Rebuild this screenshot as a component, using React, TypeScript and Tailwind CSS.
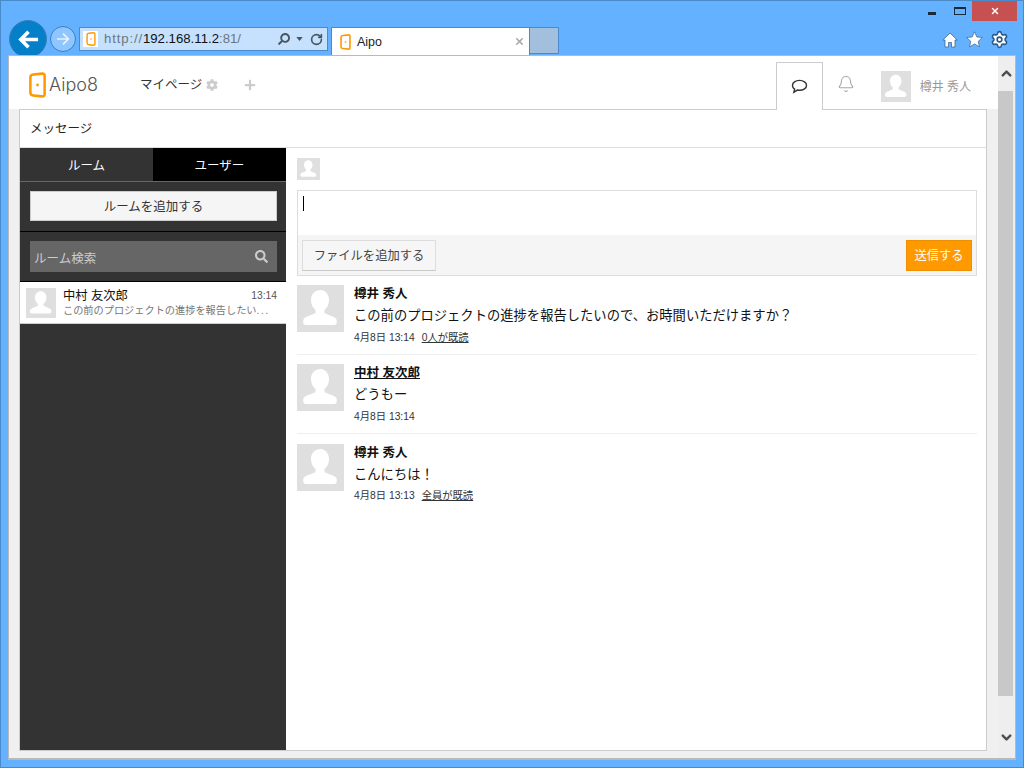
import { Bell, ChevronDown, ChevronUp, RotateCw, Settings, X } from "lucide-react";
import { FaCog, FaPlus, FaSearch } from "react-icons/fa";

const font = { sans: "font-['Liberation_Sans','Noto_Sans_CJK_JP',sans-serif]" };

function Person({ className }: { className: string }) {
  return (
    <div className={`shrink-0 bg-[#dfdfdf] ${className}`}>
      <svg viewBox="0 0 47 47" className="block h-full w-full">
        <path
          d="M23.500 5c-5.500 0-9.500 4-9.500 10 0 4.500 2 8 4.500 10v3c-3 2-9 3-11.500 5.500-1 1.500-1 3.500-.5 5 .5 1 1.500 1.500 3 1.500h27c1.500 0 2.500-.5 3-1.500.5-1.500.5-3.500-.5-5C36.500 31 30.500 30 27.500 28v-3c2.500-2 4.500-5.500 4.500-10 0-6-4-10-8.500-10z"
          fill="#fff"
        />
      </svg>
    </div>
  );
}

function DoorLogo({ className }: { className: string }) {
  return (
    <svg viewBox="0 0 16 24" className={className}>
      <path d="M4 2.200 12.500 1.300c1.200-.1 2.200.6 2.200 1.900v17.600c0 1.300-1 2-2.200 1.900L4 21.800c-1.600-.2-2.700-1.200-2.700-2.800V5c0-1.600 1.100-2.600 2.700-2.800z" fill="none" stroke="#ff9900" strokeWidth="2.400" />
      <circle cx="8" cy="12" r="1.300" fill="#ff9900" />
    </svg>
  );
}

function Message({
  name,
  text,
  time,
  read,
  underline,
  last,
}: {
  name: string;
  text: string;
  time: string;
  read?: string;
  underline?: boolean;
  last?: boolean;
}) {
  return (
    <div className={`flex gap-[10px] ${last ? "pt-[10px]" : "h-[79px] border-b border-[#eeeeee] pt-[9px]"}`}>
      <Person className="h-[47px] w-[47px]" />
      <div className="min-w-0 flex-1">
        <div className={`h-[18px] text-[12.500px] leading-[18px] font-bold text-[#111] ${underline ? "underline" : ""}`}>{name}</div>
        <div className="mt-[3px] text-[13.300px] leading-[20px] text-[#111]">{text}</div>
        <div className={`${last ? "mt-[4px]" : "mt-[5px]"} flex gap-[7px] text-[10.300px] leading-[14px] text-[#333]`}>
          <span>{time}</span>
          {read && <span className="underline">{read}</span>}
        </div>
      </div>
    </div>
  );
}

export default function App() {
  return (
    <div className={`flex h-[768px] w-[1024px] flex-col overflow-hidden border border-[#4a8acb] bg-[#63b1ff] ${font.sans}`}>
      {/* window controls */}
      <div className="flex h-[20px] shrink-0 items-start justify-end pr-[6px]">
        <div className="flex h-[20px] w-[28px] items-center justify-center pr-[4px]">
          <div className="h-[3px] w-[8px] translate-y-[2px] bg-[#1a2a3a]" />
        </div>
        <div className="flex h-[20px] w-[24px] items-center justify-center">
          <div className="h-[8px] w-[12px] border border-t-2 border-[#1a2a3a]" />
        </div>
        <div className="flex h-[20px] w-[45px] items-center justify-center bg-[#c75050]">
          <X className="h-[10px] w-[10px] text-white" strokeWidth={3.500} />
        </div>
      </div>

      {/* browser toolbar */}
      <div className="flex h-[34px] shrink-0 items-start pl-[8px]">
        <div className="-mt-[1px] flex h-[38px] w-[38px] shrink-0 items-center justify-center rounded-full border border-[#3a7fb5] bg-[#0580c8]">
          <svg viewBox="0 0 24 24" className="h-[23px] w-[23px]" fill="none" stroke="#fff" strokeWidth="3.800">
            <path d="M12 4 4 12l8 8M4 12h18" />
          </svg>
        </div>
        <div className="mt-[5px] ml-[3px] flex h-[26px] w-[26px] shrink-0 items-center justify-center rounded-full border border-[#3a7fc0] bg-[#8fc6ff]">
          <svg viewBox="0 0 24 24" className="h-[16px] w-[16px]" fill="none" stroke="#eaf4ff" strokeWidth="2.500">
            <path d="M12 4l8 8-8 8M20 12H3" />
          </svg>
        </div>
        <div className="mt-[6px] ml-[3px] flex h-[24px] w-[249px] shrink-0 items-center border border-[#4a8acb] bg-[#c5e1fd] pr-[4px] pl-[3px]">
          <div className="flex h-[16px] w-[15px] items-center justify-center bg-white">
            <DoorLogo className="h-[14px] w-[10px]" />
          </div>
          <div className="ml-[6px] flex-1 text-[13.200px] text-[#6b7680]">
            <span className="tracking-[0.85px]">http://</span>
            <span className="text-[#111]">192.168.11.2</span>:81/
          </div>
          <FaSearch className="h-[12px] w-[12px] -scale-x-100 text-[#4b5560]" />
          <svg viewBox="0 0 8 5" className="ml-[6px] h-[4px] w-[7px]">
            <path d="M0 0h8L4 5z" fill="#4b5560" />
          </svg>
          <RotateCw className="ml-[7px] h-[13px] w-[13px] text-[#4b5560]" strokeWidth={3} />
        </div>
        <div className="mt-[6px] ml-[3px] flex h-[28px] w-[199px] shrink-0 items-center border-x border-t border-[#4a8acb] bg-white pr-[4px] pl-[8px]">
          <DoorLogo className="h-[16px] w-[11px]" />
          <span className="ml-[6px] flex-1 pt-[2px] text-[12.500px] text-[#222]">Aipo</span>
          <X className="h-[11px] w-[11px] text-[#a8a8a8]" strokeWidth={3.500} />
        </div>
        <div className="mt-[6px] h-[27px] w-[29px] shrink-0 border-y border-r border-[#4a8acb] bg-[#a2c0de]" />
        <div className="mt-[9px] ml-auto flex items-center pr-[14px]">
          <svg viewBox="0 0 16 16" className="h-[16px] w-[16px]" fill="#fff" stroke="#2b5a88" strokeWidth=".7">
            <path d="M8 1 .8 8h2.200v7h3.500v-4.500h3V15H13V8h2.200z" />
          </svg>
          <svg viewBox="0 0 16 16" className="ml-[8px] h-[17px] w-[17px]" fill="#fff" stroke="#2b5a88" strokeWidth=".6">
            <path d="m8 .8 2.200 4.800 5.200.6-3.900 3.500 1.100 5.200L8 12.200l-4.600 2.700 1.100-5.200L.6 6.200l5.200-.6z" />
          </svg>
          <Settings className="ml-[7px] h-[19px] w-[19px] fill-white text-[#2b5a88]" strokeWidth={2} />
        </div>
      </div>

      {/* page */}
      <div className="relative z-10 mx-[7px] mb-[7px] flex min-h-0 flex-1 border-x border-t border-b-2 border-[#b9b9b9] bg-[#f0f0f0]">
        <div className="flex min-w-0 flex-1 flex-col">
          {/* app header */}
          <header className="flex h-[53px] shrink-0 items-stretch bg-white">
            <div className="flex w-[131px] items-center pt-[4px] pl-[20px]">
              <DoorLogo className="h-[26px] w-[17px]" />
              <span className="ml-[3px] font-['Inter',sans-serif] text-[18px] font-light text-[#555]">Aipo8</span>
            </div>
            <div className="flex items-center pt-[6px] text-[12.500px] text-[#333]">
              マイページ
              <FaCog className="-mt-[2px] ml-[4px] h-[12px] w-[12px] text-[#cccccc]" />
              <FaPlus className="-mt-[2px] ml-[26px] h-[12px] w-[12px] text-[#cccccc]" />
            </div>
            <div className="ml-auto flex items-stretch pr-[27px]">
              <div className="relative z-10 mt-[6px] flex h-[48px] w-[47px] items-center justify-center border-x border-t border-[#cccccc] bg-white">
                <svg viewBox="0 0 18 16" className="h-[15px] w-[17px]" fill="none" stroke="#333" strokeWidth="1.500">
                  <path d="M9 1.500c4.200 0 7.500 2.300 7.500 5.300S13.200 12 9 12c-.8 0-1.600-.1-2.300-.2L3 14.200l.8-3.400C2.300 9.800 1.500 8.400 1.500 6.800 1.500 3.800 4.800 1.500 9 1.500z" />
                </svg>
              </div>
              <div className="flex w-[46px] items-center justify-center pt-[3px]">
                <Bell className="h-[18px] w-[18px] text-[#a8a8a8]" strokeWidth={1.500} />
              </div>
              <div className="ml-[12px] flex items-center pt-[8px]">
                <Person className="h-[31px] w-[30px]" />
                <span className="ml-[9px] text-[12px] text-[#999]">樽井 秀人</span>
              </div>
            </div>
          </header>

          {/* card */}
          <div className="mr-[11px] ml-[10px] flex min-h-0 flex-1 flex-col border border-[#cccccc] bg-white">
            <div className="flex h-[38px] shrink-0 items-center border-b border-[#dddddd] pt-[2px] pl-[10px] text-[12.500px] text-[#222]">メッセージ</div>
            <div className="flex min-h-0 flex-1">
              {/* sidebar */}
              <aside className="flex w-[266px] shrink-0 flex-col bg-[#333333]">
                <div className="flex h-[34px] shrink-0 border-b border-[#666666] text-[12.500px] text-white">
                  <div className="flex w-[133px] items-center justify-center pt-[3px]">ルーム</div>
                  <div className="flex flex-1 items-center justify-center bg-black pt-[3px]">ユーザー</div>
                </div>
                <div className="shrink-0 border-b border-black px-[10px] pt-[9px] pb-[10px]">
                  <button className="h-[30px] w-[247px] border border-[#cccccc] bg-[#f5f5f5] pt-[2px] text-[12.500px] text-[#333]">ルームを追加する</button>
                </div>
                <div className="shrink-0 border-b border-black px-[10px] py-[9px]">
                  <div className="flex h-[31px] w-[247px] items-center justify-between bg-[#666666] pr-[9px] pl-[4px] text-[12.500px] text-[#cccccc]">
                    <span className="mt-[5px]">ルーム検索</span>
                    <FaSearch className="h-[13px] w-[13px] text-[#cccccc]" />
                  </div>
                </div>
                <div className="flex h-[42px] shrink-0 gap-[7px] border-b border-[#cccccc] bg-white pt-[6px] pr-[9px] pl-[6px]">
                  <Person className="h-[30px] w-[30px]" />
                  <div className="mt-[1px] min-w-0 flex-1">
                    <div className="flex h-[14px] items-center justify-between text-[12.300px] text-[#111]">
                      <span>中村 友次郎</span>
                      <span className="text-[10.300px] text-[#555]">13:14</span>
                    </div>
                    <div className="mt-[1px] text-[10.200px] leading-[14px] whitespace-nowrap text-[#777]">
                      この前のプロジェクトの進捗を報告したい<span className="tracking-[1.500px]">...</span>
                    </div>
                  </div>
                </div>
              </aside>

              {/* conversation */}
              <main className="min-w-0 flex-1 pt-[10px] pr-[9px] pl-[11px]">
                <Person className="h-[22px] w-[23px]" />
                <div className="mt-[10px] border border-[#dddddd]">
                  <div className="h-[44px] pt-[5px] pl-[5px]">
                    <div className="h-[15px] w-px bg-black" />
                  </div>
                  <div className="flex h-[40px] items-start justify-between bg-[#f5f5f5] px-[4px] pt-[5px]">
                    <button className="h-[31px] w-[134px] border border-[#dddddd] border-b-[#c8c8c8] bg-[#f6f6f6] pt-[2px] text-[12.300px] text-[#444]">ファイルを追加する</button>
                    <button className="h-[31px] w-[66px] border border-[#ee9000] bg-[#ff9900] pt-[2px] text-[12.300px] text-white">送信する</button>
                  </div>
                </div>
                <Message name="樽井 秀人" text="この前のプロジェクトの進捗を報告したいので、お時間いただけますか？" time="4月8日 13:14" read="0人が既読" />
                <Message name="中村 友次郎" underline text="どうもー" time="4月8日 13:14" />
                <Message name="樽井 秀人" text="こんにちは！" time="4月8日 13:13" read="全員が既読" last />
              </main>
            </div>
          </div>
          <div className="h-[7px] shrink-0" />
        </div>

        {/* page scrollbar */}
        <div className="flex w-[17px] shrink-0 flex-col bg-[#eeeeee]">
          <div className="flex h-[35px] shrink-0 items-center justify-center">
            <ChevronUp className="h-[15px] w-[15px] text-[#505050]" strokeWidth={4} />
          </div>
          <div className="mr-[2px] min-h-0 flex-1 bg-[#c8c8c8]" />
          <div className="flex h-[62px] shrink-0 items-end justify-center pb-[13px]">
            <ChevronDown className="h-[15px] w-[15px] text-[#505050]" strokeWidth={4} />
          </div>
        </div>
      </div>
    </div>
  );
}
